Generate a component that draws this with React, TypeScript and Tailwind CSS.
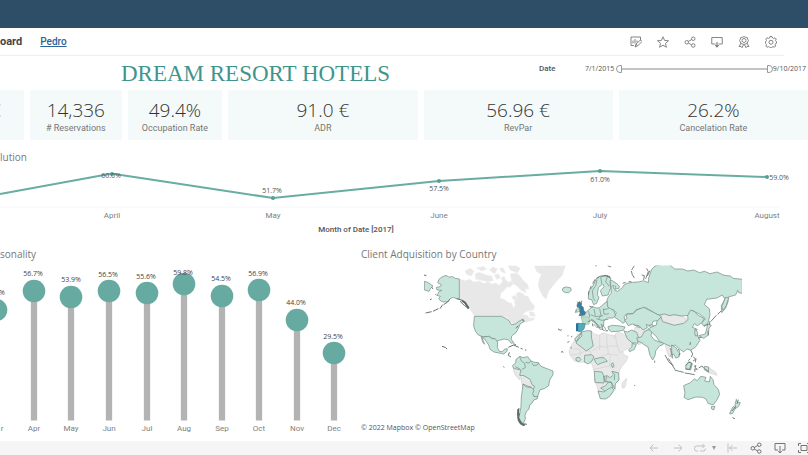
import React from "react";

const kpis = [
  { value: "14,336", label: "# Reservations" },
  { value: "49.4%", label: "Occupation Rate" },
  { value: "91.0 €", label: "ADR" },
  { value: "56.96 €", label: "RevPar" },
  { value: "26.2%", label: "Cancelation Rate" },
];

const evolution = [
  { month: "April", value: "60.0%", x: 112, y: 174, lx: 111, ly: 178 },
  { month: "May", value: "51.7%", x: 273, y: 198, lx: 272, ly: 193 },
  { month: "June", value: "57.5%", x: 439, y: 181, lx: 439, ly: 191 },
  { month: "July", value: "61.0%", x: 600, y: 171, lx: 600, ly: 182 },
  { month: "August", value: "59.0%", x: 767, y: 177, lx: 779, ly: 180 },
];

const seasonality = [
  { month: "r", value: "%", x: -4, y: 310, mx: 2, vx: 2, vy: 295 },
  { month: "Apr", value: "56.7%", x: 34, y: 291, mx: 34, vx: 33, vy: 276 },
  { month: "May", value: "53.9%", x: 71, y: 297, mx: 71, vx: 71, vy: 282 },
  { month: "Jun", value: "56.5%", x: 109, y: 291, mx: 109, vx: 108, vy: 277 },
  { month: "Jul", value: "55.6%", x: 147, y: 293, mx: 147, vx: 146, vy: 279 },
  { month: "Aug", value: "59.8%", x: 184, y: 284, mx: 184, vx: 183, vy: 275 },
  { month: "Sep", value: "54.5%", x: 222, y: 296, mx: 222, vx: 221, vy: 281 },
  { month: "Oct", value: "56.9%", x: 259, y: 290, mx: 259, vx: 258, vy: 276 },
  { month: "Nov", value: "44.0%", x: 297, y: 320, mx: 297, vx: 296, vy: 305 },
  { month: "Dec", value: "29.5%", x: 334, y: 353, mx: 334, vx: 333, vy: 339 },
];

function Icon({ children }: { children: React.ReactNode }) {
  return (
    <svg
      viewBox="0 0 24 24"
      className="h-3 w-3 shrink-0"
      fill="none"
      stroke="currentColor"
      strokeWidth="1.8"
      aria-hidden="true"
    >
      {children}
    </svg>
  );
}

const sharePaths = (
  <>
    <circle cx="5.5" cy="12.5" r="3.5" />
    <circle cx="18.5" cy="5.5" r="3.5" />
    <circle cx="18.5" cy="19" r="3.5" />
    <path d="M8.7 10.8 15.3 7.2M8.7 14.2l6.6 3.4" />
  </>
);

const toolbar = [
  {
    name: "Edit",
    art: (
      <>
        <path d="M21 9V2H2v17h6M6 9v6M10 6v9M14 9v4" />
        <path d="m10 22 2-6 9-8 3 3-9 9zM12 16l3 4" />
      </>
    ),
  },
  {
    name: "Favorite",
    art: <path d="m12 1.5 3.1 7.3 7.9.7-6 5.2 1.8 7.8L12 18.3l-6.8 4.2L7 14.7 1 9.5l7.900-.7z" />,
  },
  { name: "Share", art: sharePaths },
  {
    name: "Download",
    art: (
      <>
        <path d="M9 16H1.500V3h21v13H15" />
        <path d="M12 12v9M8.500 18l3.500 4 3.500-4" strokeWidth="2.200" />
      </>
    ),
  },
  {
    name: "Badge",
    art: (
      <>
        <path d="m12 1 3 1.500 3.500.5.7 3.300L21 9l-1.800 3-.7 3.200-3.500.6-3 1.600-3-1.600-3.500-.6L4.800 12 3 9l1.800-2.700.7-3.300L9 2.500z" />
        <circle cx="12" cy="9" r="4" />
        <path d="M6 15 2 21l4-.3 2 2.800 3-6M18 15l4 6-4-.3-2 2.800-3-6" />
      </>
    ),
  },
  {
    name: "Settings",
    art: (
      <>
        <path d="m10 1h4l1 3 2.200.9L20 3.500 22.500 6l-1.400 2.800L22 11l1 .5v3l-2 .8-.9 2.200 1.200 2.500-2.500 2.500-2.600-1.300-2.200.9-1 1.400h-3l-1-1.400-2.200-.9L4 22.500 1.700 20l1.200-2.500L2 15.300l-1-.8v-3l1-.5.9-2.200L1.500 6 4 3.500l2.800 1.400L9 4z" />
        <circle cx="12" cy="12.500" r="4" />
      </>
    ),
  },
];

function LineChart() {
  return (
    <svg viewBox="0 164 808 76" className="block w-full" role="img" aria-label="Occupation rate evolution by month">
      <path d="M0 207H780" stroke="#f6f6f6" />
      <path
        d="M0 194 104 175Q112 173 121 175L273 198 439 181 600 171 767 177"
        fill="none"
        stroke="#69aca3"
        strokeWidth="2"
      />
      {evolution.map((p) => (
        <g key={p.month} textAnchor="middle">
          <circle cx={p.x} cy={p.y} r="2" fill="#53a096" />
          <text x={p.lx} y={p.ly} className="fill-[#555] font-['Open_Sans',sans-serif] text-[7px]">
            {p.value}
          </text>
          <text x={p.x} y="218" className="fill-[#808080] font-['Roboto',sans-serif] text-[8px]">
            {p.month}
          </text>
        </g>
      ))}
      <text
        x="356"
        y="232"
        textAnchor="middle"
        className="fill-[#555] font-['Roboto',sans-serif] text-[8px] font-medium"
      >
        Month of Date [2017]
      </text>
    </svg>
  );
}

function Lollipops() {
  return (
    <svg viewBox="0 262 361 176" className="block w-full" role="img" aria-label="Seasonality by month">
      {seasonality.map((p) => (
        <g key={p.month} textAnchor="middle">
          <path d={`M${p.x} ${p.y}V420.500`} stroke="#b3b3b3" strokeWidth="6.300" />
          <circle cx={p.x} cy={p.y} r="11.300" fill="#66aaa2" />
          <text x={p.vx} y={p.vy} className="fill-[#444] font-['Open_Sans',sans-serif] text-[7px]">
            {p.value}
          </text>
          <text x={p.mx} y="431" className="fill-[#808080] font-['Roboto',sans-serif] text-[8px]">
            {p.month}
          </text>
        </g>
      ))}
    </svg>
  );
}

function WorldMap() {
  return (
    <svg viewBox="361 262 447 176" className="block w-full" role="img" aria-label="Clients by country">
      <clipPath id="frame">
        <rect x="424" y="265.500" width="318" height="165" />
      </clipPath>
      <g clipPath="url(#frame)" strokeLinejoin="round">
        {/* Americas */}
        <g transform="translate(420 260) scale(.33333)">
          <g fill="#e8e8e8" stroke="#efefef" strokeWidth="1.500">
            <path d="M119 57 135 62 150 57 160 66 178 63 190 70 205 66 216 72 228 69 238 76 247 65 244 54 252 48 258 61 266 67 273 62 280 72 270 82 261 80 252 92 243 99 240 114 254 119 266 128 276 130 280 145 286 136 283 124 291 113 288 101 296 96 308 100 316 108 324 109 332 125 344 139 340 149 326 152 313 158 309 165 321 165 329 175 345 173 340 181 326 184 318 188 313 180 300 183 290 195 270 186 262 173 247 168H163L152 151 145 136 127 119H119Z" />
            <path d="M343 17H437L432 29 427 46 413 60 399 77 386 94 378 118 368 108 359 91 354 75 358 58 364 43 350 35Z" />
            <path d="M270 43 288 38 300 48 311 62 323 73 327 88 315 86 319 99 303 91 291 78 278 71Z" />
            <path d="m165 42 12-5 20 7 18 4 5 14-18 3-18-4-17-3Z" />
            <path d="m135 32 16-7 11 9-8 14-15-5ZM169 24l22-5 9 8-14 6ZM208 30l11-10 13 7-8 14ZM238 24h12l7 16-13-5ZM264 17h24l13 8-8 13-22-7ZM223 45l14-3 4 13-11 3ZM275 110l10-4 7 10-10 5ZM328 155l13 1 5 12-16 1Z" />
            <path d="m280 329 10-10 12 6 4 22-8 12-12-14ZM303 357l10-9 19 8 5 15 9 12-8 9-18-5-7 15Z" stroke="#bbb" />
          </g>
          <g fill="#c6e6dc" stroke="#7b8f89" strokeWidth="2.200">
            <path d="M118 57V116L109 116 100 112 90 116 84 125 70 126 62 123 56 116 61 109 51 106 57 95 66 91 51 90 49 82 61 80 64 74 53 68 57 58 66 51 78 46 86 51 98 50 106 55Z" />
            <path d="m13 64 10 3 16 11-7 7-5 9-14-4Z" />
            <path d="M163 169H245L258 176 267 182 274 194 286 192 297 184 309 177 313 184 301 191 295 205 288 218 275 228 274 238 281 248 274 250 266 240 253 237 237 241 230 244 225 236 216 235 208 229 187 230 174 224 166 213 161 198Z" />
            <path d="m183 229 10 2 14-2 9 7 9 0 8 10-1 17 6 11 9 1 7-8 8-1-1 8-10 8-9-2-20-4-12-8-4-13-12-18-8-4 8 20-5-5Z" />
            <path d="M288 298 300 289 309 293 323 290 333 303 344 307 355 308 363 319 378 325 399 333 399 344 389 360 386 377 373 386 360 389 350 417 341 406 330 400 338 391 344 379 336 374 330 358 312 347 299 346 303 330 280 325 278 316 287 309Z" />
            <path d="M309 372 317 380 334 383 342 390 338 401 342 410 353 409 351 417 341 420 335 431 329 435 327 447 319 455 315 466 316 478 310 489 321 493 308 496 299 488 294 473 299 462 303 440 304 410 307 391Z" />
            <path d="M299 290 304 303 314 310 316 323 306 328M317 307 327 309 333 303M335 308 341 317 352 315 356 308M310 372 322 378 336 382M300 327 286 320" fill="none" />
          </g>
          <path
            d="m110 116 17 5M124 119l20 20 2 7-12-9-14-13M89 118l-6 8-12 8M68 134l-8 12M55 146l-16 8M35 155l-18 4M12 45l7 2M36 82l3 5M30 119l5-2M46 103l3 2M66 259l10 3 5 5M265 262l16-7 15 7M281 251l7 4M302 265l6 2M315 270h4M268 277l-3 9 8 5M250 320l3 2M288 205l7-8M307 179l5 6M415 207l4 2M421 211l3 2M426 274l4 3M444 226v3M297 444l-3 11M299 460l-4 13 6 8M297 478l13 15"
            stroke="#66726e"
            strokeWidth="3"
            fill="none"
          />
          <path d="m126 122 9 6 11 17M295 447l-1 17 2 16 6 10 12 6" stroke="#5f6b67" strokeWidth="6" fill="none" />
        </g>
        {/* Europe, Africa, Asia and Oceania */}
        <g transform="translate(555 260) scale(.33333)">
          <g fill="#e8e8e8" stroke="#cacaca" strokeWidth="1.500">
            <path d="M69 222 91 215 109 213 118 222 132 226 145 219 167 225 181 227 188 245 197 263 207 284 219 290 212 306 201 318 194 331 190 346 192 360 180 373 176 389 170 402 154 416 136 415 130 393 124 374 118 361 120 344 115 328 111 311 95 306 73 307 58 303 45 285 42 276 47 260Z" />
            <path d="m181 221 9-4 15 5 15 13 12 13-8 14-24 14-6 1-9-25ZM240 202l17 0 8 10 15-5 3 15-12 11-8 17-14 4-8-15-6-17ZM330 251l11-5 4 12-3 20 4 12-5-1-7-21ZM460 322l22 14 4 10-24-7ZM208 362l7-7-3 20-5 10-6-3 0-12Z" />
            <path d="M315 169 328 162 345 167 357 164 380 168 397 178 386 191 355 196 338 188 321 184Z" />
            <path d="M134 226v44M155 226l1 33M77 247l15 25-18 9-28 5M92 272l15 1 2 26M134 259l24 3 2 20-22 7M156 258h32M157 282l33 4M174 225l5 12M112 272l21-13M56 267l19 0 1 19M118 328l44-10 19 5M166 287l-3 30M124 370l24-2" fill="none" />
          </g>
          <g fill="#c6e6dc" stroke="#7b8f89" strokeWidth="2.200">
            {/* Russia */}
            <path d="M164 60 172 62 184 70 194 79 191 86 180 87 182 79 173 77 180 91 188 94 202 83 207 75 216 70 233 67 250 66 266 62 280 68 281 54 290 28 300 18 321 13 341 12 359 27 382 27 398 33 417 30 433 38 449 34 465 41 486 36 507 46 526 48 535 55 562 58V100L551 98 548 91 542 105 520 111 519 126 512 144 500 158 499 137 510 118 502 105 486 114 455 118 448 134 463 146 465 164 459 190 446 198 440 189 451 176 435 163 411 151 405 166 379 168 357 164 345 167 328 162 310 165 296 157 271 142 244 149 235 160 216 162 207 170 211 184 204 190 193 181 178 171 184 158 174 149 162 148 151 137 155 124 160 110 169 99 168 80Z" />
            {/* Nordics */}
            <path d="m100 117 1-21 13-19 9-19 14-10 19-2 12 8-3 11 2 19-8 21-17 3-6-16 11-12-4-8-13 11-3 21 5 8-7 18-9 4-6-15Z" />
            <path d="M126 59 122 77 112 92 115 115 121 123M137 48 140 71M158 47 152 65 163 79" fill="none" />
            <path d="m24 84 9-3 13 2 3 8-8 7-10 0-9-6Z" />
            {/* Continental Europe */}
            <path d="m79 168 10-7 8-8 8-6 6-8 13 5 10-1 12-11 11-8 1 17 18 10 6 15-9 8-15 0-11 8-2 17-13 6-11-15-11-8-8-1-5 2-4 8-10-2-1-12Z" />
            <path d="m113 178 8 9 11 11 4 11 8-4-6-13 10 8 6 12M108 177l15 12 7 10-3 5-11-12M101 154l3 18M117 147l4 20M106 164l16 6 22-3M134 146l4 20-7 11M145 146l2 17 15-2M124 176l17 5 19-3M144 149l17-3" fill="none" />
            <path d="m159 200 14-4 22 2 15 3-5 10-17 3-19 1-8-6Z" />
            {/* Central Asia */}
            <path d="m213 163 22-2 10-11 21-8 29 15 24 12-8 12-17 3-4 12-21-1-16 8-20-11-13 5-7-11-4-6 7-5Z" />
            <path d="m236 195 16 2 12 13 13-7-3-11M280 199l10-5 8 5-8 7" />
            <path d="m207 213 11 3 12-6 15 7 5 14-2 19-17-2-14-12ZM232 250l12 4-6 14-14 7-3-6 9-7Z" />
            <path d="m245 234 14-3 8-15 13-7 11 4-3 14 10 13 18 7 11-3-3 10-11 4-11 15-2 14-7 13-8-14-6-25-12-7-8-7-9-2Z" />
            <path d="m280 206 10-5 14-6 2-11 12-12 5 13 16 5 19 6 28-6 13-11-1-13 9-16 12 5 9 10 20 11-7 12-14 9-9-6-6 11 15 6-5 8 13 25-14 21-14 8-12-3-9 9-11-8-15-13-13 4-16-7-18-8-8-13Z" />
            <path d="m350 255 15 10 3 9 7 5-3 12-10 3-5-11-6 0-1-13ZM352 283l1 12-7-9Z" />
            {/* Africa */}
            <path d="m80 216 15-4 14 1 0 18 6 27-21 15-31-24ZM63 245l18-17-2-11-9 10-11 9Z" />
            <path d="m89 286 20-2 8 6-6 13-12 9-11-6ZM118 297l17-4 12 0 10 11-15 4-13 6-7-6ZM63 294l9-3 6 8-6 6-9-4ZM118 334l23 2 7 15-1 18-27-2ZM145 350l11-3 9 6 9-7-2-12 19 5 1 21-11 11-1 17-8-15-4-7-18-1ZM137 384l15-7 8-11 9 1 4 15-17 15Z" />
            <path d="M129 393 147 396 159 387 170 382 177 391 164 409 151 417 136 416ZM168 313l5-5 4 9-4 6ZM170 335l9 8-1 17M155 349l-3 15 14 3" />
            {/* Oceania */}
            <path d="M386 377 406 368 418 357 427 362 437 349 453 352 449 363 463 366 466 349 474 359 477 374 490 388 494 403 485 421 475 434 460 431 453 417 442 412 423 411 399 419 387 412 390 399Z" />
            <path d="m469 439 11 0-4 11-6-3ZM544 418l3 9 9 1-5 11-10 7-1-12ZM535 439l6 6-8 15-9 2 3-9Z" />
            <path d="m393 317 10-12 9 6-5 19-15-3ZM448 319l13 2-1 16-12-8ZM500 140l12-28 9 1-7 23-10 15Z" />
            <path d="m458 192 11 4-7 9-2 20-14 10-15-8 20-5 4-15ZM420 207l8 10-1 10-6 1-2-11Z" />
          </g>
          <path d="m67 131 5-6 8 3-1 9 6 5 1 9 6 6-3 8-17 2 4-8-5-6 2-8-7-5Z" fill="#397fa0" stroke="#64726e" strokeWidth="2" />
          <path d="m63 148 7-5 4 10-9 5ZM78 171l22 0 6 11-4 11-18-1Z" fill="#b8dfca" stroke="#a5baac" strokeWidth="2" />
          <path d="m68 190 23 1-4 16-9 8-9-1Z" fill="#57a9bd" stroke="#398198" strokeWidth="2" />
          <path d="M63 190h7l-1 24h-6Z" fill="#29749b" />
          <path
            d="m100 105 2-12M104 88l5-10M113 71l7-13M124 55l10-6M139 49l15-2 11 7M147 46l18 4M103 139l10 3M98 186l7-4M112 190l2 9M140 207l9 5M152 213l7-1M67 125l4 5M79 122l2 4M61 158l3-8M230 30l8-13M229 33l3 11 6 10M203 70l9-3M221 65h8M260 45l8 2-2 13M275 25l5 10-8 21M285 32l-8 16M120 16l6 2M158 17l10 4M330 285l11 20 12 12 7 12M340 295l6 10 9 13M359 330l14 4 13 3M389 339l13 2 17 3M391 317l10-11 9 4-6 18-12-1M417 319l6-2-3 6 7 5-8-1 1 9M431 324l10-6 6 7M449 326l12 9M407 270l6 12-4 9M415 290l7 8-8 5M423 295l-2 12M400 302l6-6M447 199l13-7M464 184v11M459 213l1 13M440 232l-10 2M467 185l17-19M488 163l10-10M406 246l-1 9M370 267l4 8M347 264l2 20M10 208l4 2M17 209h3M20 274v4M48 231l4-2M47 263l4 1M43 245l-6 2M550 419l-4 13M543 438l-12 15M532 473l8 3M239 375v3M371 286l4-7M299 302v6"
            stroke="#6f7b77"
            strokeWidth="2.800"
            fill="none"
          />
        </g>
      </g>
    </svg>
  );
}

const thumb =
  "pointer-events-none absolute inset-0 h-2 w-full appearance-none bg-transparent [&::-webkit-slider-thumb]:pointer-events-auto [&::-webkit-slider-thumb]:h-2 [&::-webkit-slider-thumb]:w-1.5 [&::-webkit-slider-thumb]:appearance-none [&::-webkit-slider-thumb]:border [&::-webkit-slider-thumb]:border-[#999] [&::-webkit-slider-thumb]:bg-white";

export default function App() {
  return (
    <div className="flex min-h-screen flex-col overflow-hidden bg-white font-['Open_Sans','Noto_Sans',sans-serif] text-[#555]">
      <div className="h-7 bg-[#2e4d67]" />

      <header className="mr-6 flex h-7 items-center border-b border-[#eee] font-['Roboto',sans-serif]">
        <h1 className="text-[11px] leading-4 font-bold text-[#444]">oard</h1>
        <a href="#pedro" className="ml-[18px] text-[10px] leading-4 font-medium text-[#2d6297] underline">
          Pedro
        </a>
        <nav className="ml-auto flex">
          {toolbar.map((t) => (
            <button key={t.name} aria-label={t.name} className="flex w-[27px] items-center justify-center text-[#777]">
              <Icon>{t.art}</Icon>
            </button>
          ))}
        </nav>
      </header>

      <div className="grid h-[34px] grid-cols-[511fr_297fr]">
        <h2 className="pt-1 text-center font-['Liberation_Serif',serif] text-[23px] leading-7 text-[#3f958c]">
          DREAM RESORT HOTELS
        </h2>
        <div className="flex h-[26px] items-center pr-0.5 pl-7 text-[7px]">
          <span className="w-[46px] font-['Roboto',sans-serif] text-[8px] font-medium">Date</span>
          <label htmlFor="from">7/1/2015</label>
          <div className="relative ml-0.5 h-2 flex-1">
            <div className="absolute inset-x-1.5 top-[3px] h-0.5 bg-[#c4c4c4]" />
            <input
              id="from"
              type="range"
              defaultValue={0}
              className={`${thumb} [&::-webkit-slider-thumb]:rounded-l-full`}
            />
            <input
              id="to"
              type="range"
              defaultValue={100}
              className={`${thumb} [&::-webkit-slider-thumb]:rounded-r-full`}
            />
          </div>
          <label htmlFor="to">9/10/2017</label>
        </div>
      </div>

      <section className="grid h-[50px] grid-cols-[24px_92fr_95fr_190fr_190fr_190fr] gap-1.5">
        <div className="overflow-hidden bg-[#f3faf9] pt-2">
          <p className="-ml-2.5 text-[19px] leading-6 font-light text-[#444]">€</p>
        </div>
        {kpis.map((k) => (
          <div key={k.label} className="bg-[#f3faf9] pt-2 text-center whitespace-nowrap">
            <p className="text-[19px] leading-6 font-light text-[#333]">{k.value}</p>
            <p className="font-['Roboto',sans-serif] text-[9px] leading-3 text-[#777]">{k.label}</p>
          </div>
        ))}
      </section>

      <section className="pt-2.5">
        <h3 className="text-[10px] leading-[14px] text-[#777]">lution</h3>
        <LineChart />
      </section>

      <section className="grid grid-cols-[361fr_447fr] pt-1.5">
        <div>
          <h3 className="text-[10px] leading-4 text-[#777]">sonality</h3>
          <Lollipops />
        </div>
        <div className="relative">
          <h3 className="text-[10px] leading-4 text-[#777]">Client Adquisition by Country</h3>
          <WorldMap />
          <p className="absolute bottom-1 left-0 flex gap-0.5 text-[7px] leading-3 font-medium">
            <a href="#mapbox">© 2022 Mapbox</a>
            <a href="#osm">© OpenStreetMap</a>
          </p>
        </div>
      </section>

      <footer className="mt-auto flex h-[14px] items-center justify-end bg-[#f5f5f5] text-[#666]">
        <button aria-label="Undo" className="flex w-6 justify-center text-[#bbb]">
          <Icon>
            <path d="M4 12h16M11 5l-7 7 7 7" />
          </Icon>
        </button>
        <button aria-label="Redo" className="flex w-6 justify-center text-[#bbb]">
          <Icon>
            <path d="M4 12h16M13 5l7 7-7 7" />
          </Icon>
        </button>
        <button aria-label="Replay" className="flex w-[30px] items-center justify-center gap-1.5 text-[#bbb]">
          <Icon>
            <path d="M8 18H5q-4 0-4-5t4-5h16M17 4l4 4-4 4M12 18h7q4 0 4-5" />
          </Icon>
          <svg viewBox="0 0 4 4" className="h-1 w-1" aria-hidden="true">
            <path d="M0 0h4L2 4z" fill="#999" />
          </svg>
        </button>
        <button aria-label="Revert" className="flex w-6 justify-center text-[#bbb]">
          <Icon>
            <path d="M4 3v18M7 12h15M13 6l-6 6 6 6" />
          </Icon>
        </button>
        <button aria-label="Share view" className="flex w-6 justify-center">
          <Icon>{sharePaths}</Icon>
        </button>
        <button aria-label="Download view" className="flex w-6 justify-center">
          <Icon>
            <path d="M8 16H2V3h20v13h-6M12 8v13M8.500 18l3.500 4 3.500-4" />
          </Icon>
        </button>
        <button aria-label="Full screen" className="ml-1.5 flex w-[10px] overflow-hidden">
          <Icon>
            <path d="M6 7h12v10H6zM1 8V3h5M18 3h5v5M1 16v5h5M18 21h5v-5" />
          </Icon>
        </button>
      </footer>
    </div>
  );
}
